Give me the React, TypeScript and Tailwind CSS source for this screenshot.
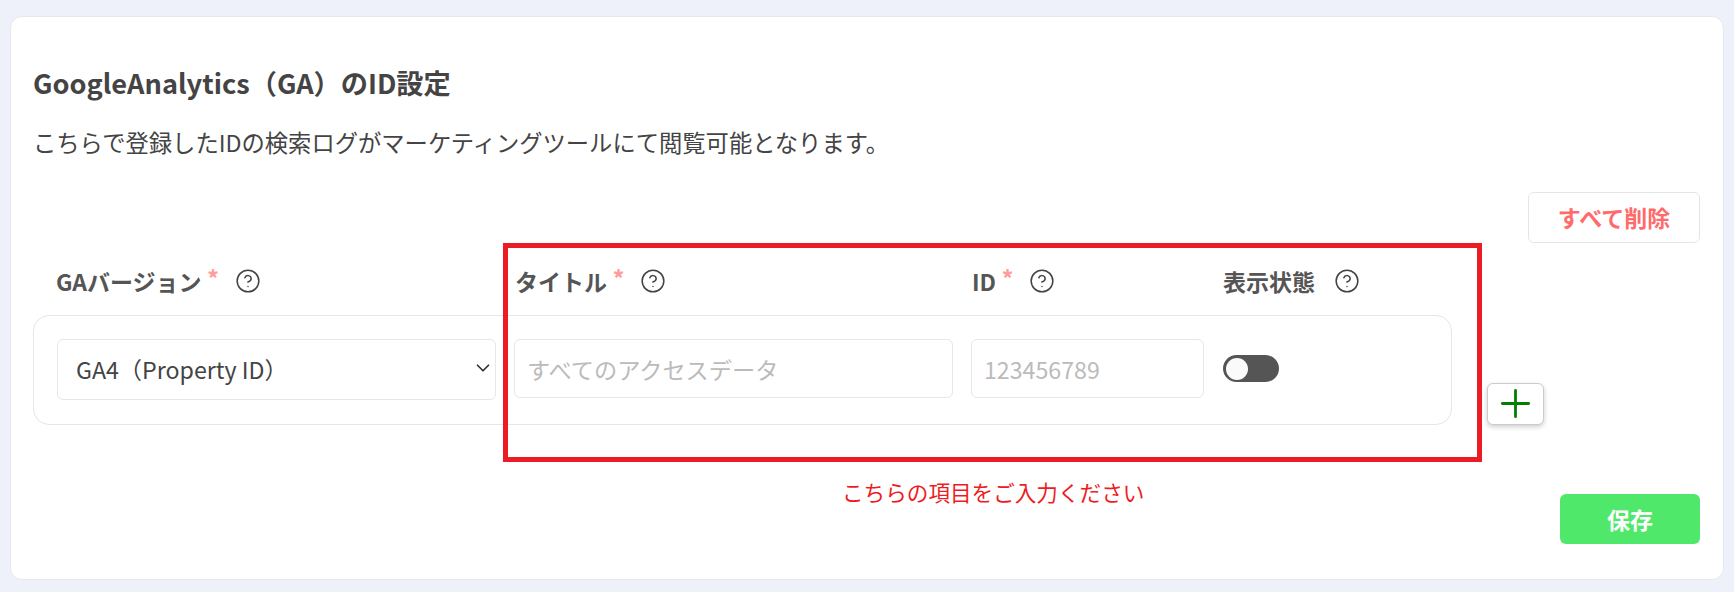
import { ChevronDown, CircleHelp, Plus } from 'lucide-react';

/* ================= TYPES ================= */
interface LabelProps {
  text: string;
  required?: boolean;
  className: string;
}

/* ================= PARTS ================= */
function ColumnLabel({ text, required, className }: LabelProps) {
  return (
    <div className={`flex items-center ${className}`}>
      <span className="text-[23px] font-bold leading-[30px] text-[#555555]">{text}</span>
      {required && (
        <span className="ml-[6px] -translate-y-1 text-[21px] font-black leading-none text-[#ff9c9c]">*</span>
      )}
      <CircleHelp size={26} strokeWidth={1.4} className={`shrink-0 text-[#444444] ${required ? 'ml-[16px]' : 'ml-[19px]'}`} />
    </div>
  );
}

/* ================= COMPONENT ================= */
export default function App() {
  return (
    <div className="h-[592px] overflow-hidden bg-[#eef1f9] pl-[10px] pr-[10px] pt-4 font-['Noto_Sans_CJK_JP',sans-serif]">
      <div className="relative flex h-[564px] flex-col rounded-xl border border-[#e8e8ec] bg-white pl-[22px] pr-[23px]">
        {/* ================= HEADER ================= */}
        <h1 className="mt-[47px] text-[27.2px] font-bold leading-[36px] text-[#444444]">
          GoogleAnalytics（GA）のID設定
        </h1>
        <p className="mt-[27px] text-[23.3px] leading-[30px] text-[#444444]">
          こちらで登録したIDの検索ログがマーケティングツールにて閲覧可能となります。
        </p>

        <div className="mt-[35px] flex justify-end">
          <button className="h-[51px] w-[172px] rounded-md border border-[#e5e5e5] bg-white text-[23px] font-bold text-[#ff6b6b]">
            すべて削除
          </button>
        </div>

        {/* ================= COLUMN LABELS ================= */}
        <div className="mt-[23px] flex h-[30px] items-center">
          <ColumnLabel text="GAバージョン" required className="ml-[23px] w-[459px]" />
          <ColumnLabel text="タイトル" required className="w-[457px]" />
          <ColumnLabel text="ID" required className="w-[251px]" />
          <ColumnLabel text="表示状態" className="" />
        </div>

        {/* ================= ROW ================= */}
        <div className="mt-[19px] flex items-end">
          <div className="flex h-[110px] w-[1419px] items-start gap-[18px] rounded-2xl border border-[#e6e6e6] px-[23px] pt-[23px]">
            <div className="relative h-[61px] w-[439px] shrink-0">
              <select className="h-full w-full appearance-none rounded-md border border-[#e6e6e6] bg-white pl-[18px] text-[23.2px] text-[#444444] outline-none">
                <option>GA4（Property ID）</option>
              </select>
              <ChevronDown size={22} strokeWidth={1.9} className="pointer-events-none absolute right-[2px] top-[18px] text-[#333333]" />
            </div>
            <input
              placeholder="すべてのアクセスデータ"
              className="h-[59px] w-[439px] shrink-0 rounded-md border border-[#e6e6e6] bg-white px-[12px] text-[23.2px] text-[#444444] outline-none placeholder:text-[#bbbbbb]"
            />
            <input
              placeholder="123456789"
              className="h-[59px] w-[233px] shrink-0 rounded-md border border-[#e6e6e6] bg-white px-[12px] text-[23.2px] text-[#444444] outline-none placeholder:text-[#bbbbbb]"
            />
            <div className="ml-px mt-[16px] flex h-[27px] w-[56px] shrink-0 items-center rounded-full bg-[#555555] pl-[3px]">
              <span className="size-[22px] rounded-full bg-[#fafafa]" />
            </div>
          </div>
          <button className="ml-[35px] flex h-[42px] w-[57px] items-center justify-center rounded-md border border-[#cccccc] bg-white shadow-[0_2px_5px_rgba(0,0,0,0.2)]">
            <Plus size={45} strokeWidth={1.5} className="shrink-0 -translate-y-px text-[#008000]" />
          </button>
        </div>

        {/* ================= FOOTER ================= */}
        <div className="mt-[69px] flex justify-end">
          <button className="h-[50px] w-[140px] rounded-md bg-[#50e86b] text-[23px] font-bold text-white">
            保存
          </button>
        </div>

        {/* ================= ANNOTATION ================= */}
        <div className="absolute left-[492px] top-[226px] h-[219px] w-[979px] border-[5px] border-[#ed1c24]" />
        <p className="absolute left-[831px] top-[459px] text-[21.6px] leading-[32px] text-[#ed1c24]">
          こちらの項目をご入力ください
        </p>
      </div>
    </div>
  );
}
